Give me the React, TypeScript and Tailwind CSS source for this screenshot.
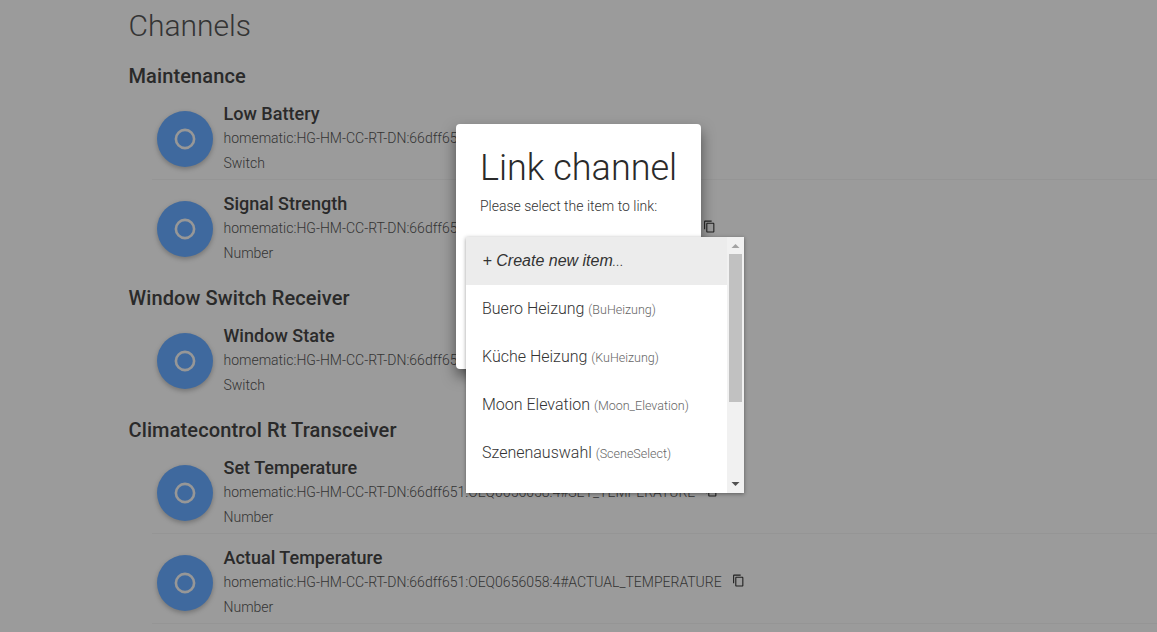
import clsx from "clsx";

interface Channel {
  name: string;
  uid: string;
  type: string;
}

interface ChannelGroup {
  title: string;
  channels: Channel[];
}

interface Item {
  label: string;
  name: string;
}

const THING_UID = "homematic:HG-HM-CC-RT-DN:66dff651:OEQ0656058";

const groups: ChannelGroup[] = [
  {
    title: "Maintenance",
    channels: [
      { name: "Low Battery", uid: `${THING_UID}:0#LOWBAT`, type: "Switch" },
      { name: "Signal Strength", uid: `${THING_UID}:0#SIGNAL_STRENGTH`, type: "Number" },
    ],
  },
  {
    title: "Window Switch Receiver",
    channels: [
      { name: "Window State", uid: `${THING_UID}:3#WINDOW_STATE`, type: "Switch" },
    ],
  },
  {
    title: "Climatecontrol Rt Transceiver",
    channels: [
      { name: "Set Temperature", uid: `${THING_UID}:4#SET_TEMPERATURE`, type: "Number" },
      { name: "Actual Temperature", uid: `${THING_UID}:4#ACTUAL_TEMPERATURE`, type: "Number" },
    ],
  },
];

const items: Item[] = [
  { label: "Buero Heizung", name: "BuHeizung" },
  { label: "Küche Heizung", name: "KuHeizung" },
  { label: "Moon Elevation", name: "Moon_Elevation" },
  { label: "Szenenauswahl", name: "SceneSelect" },
];

function CopyIcon() {
  return (
    <svg viewBox="0 0 24 24" className="h-[13px] w-[13px] fill-[#333]">
      <path d="M16 1H4c-1.100 0-2 .9-2 2v14h2V3h12V1zm3 4H8c-1.100 0-2 .9-2 2v14c0 1.100.9 2 2 2h11c1.100 0 2-.9 2-2V7c0-1.100-.9-2-2-2zm0 16H8V7h11v14z" />
    </svg>
  );
}

function ChannelRow({ channel, divider }: { channel: Channel; divider: boolean }) {
  return (
    <li className="flex h-[90px] pl-[157px]">
      <button className="mt-[21px] flex h-14 w-14 shrink-0 items-center justify-center rounded-full bg-[#66aaff] shadow-[0_2px_5px_rgba(0,0,0,0.26)]">
        <svg viewBox="0 0 22 22" className="mr-px h-[22px] w-[22px]">
          <circle cx="11" cy="11" r="9.100" fill="none" stroke="#f4f4f4" strokeWidth="2.600" />
        </svg>
      </button>
      <div
        className={clsx(
          "relative ml-[10.500px] flex-1 pt-3",
          divider && "before:absolute before:-left-[72px] before:right-0 before:bottom-0 before:h-px before:bg-[#f0f0f0]"
        )}
      >
        <h4 className="text-[18px] leading-6 font-medium tracking-[0.020px] text-[#444]">{channel.name}</h4>
        <div className="flex items-center whitespace-nowrap">
          <p className="text-[14px] leading-6 font-light text-[#555]">{channel.uid}</p>
          <button className="mt-[-4px] ml-[10px]">
            <CopyIcon />
          </button>
        </div>
        <p className="text-[14px] leading-[26px] font-light text-[#555]">{channel.type}</p>
      </div>
    </li>
  );
}

function Scrollbar() {
  return (
    <div className="flex w-[17px] flex-col items-center justify-between bg-[#f1f1f1]">
      <svg viewBox="0 0 17 17" className="h-[17px] w-[17px]">
        <path d="M4.500 11L8.500 7L12.500 11Z" fill="#a3a3a3" />
      </svg>
      <div className="mb-auto h-[148px] w-[13px] bg-[#c1c1c1]" />
      <svg viewBox="0 0 17 17" className="h-[17px] w-[17px]">
        <path d="M4.500 6L8.500 10L12.500 6Z" fill="#505050" />
      </svg>
    </div>
  );
}

function ItemMenu() {
  return (
    <div className="absolute top-[237px] left-[466px] flex h-64 w-[278px] overflow-hidden bg-white shadow-[0_1px_4px_rgba(0,0,0,0.4)]">
      <ul className="flex-1">
        <li className="flex h-12 items-center bg-[#ececec] pl-[16.500px] text-[16px] font-light text-[#333] italic">
          <span className="font-['Liberation_Sans',sans-serif] font-normal">+ Create new item</span>...
        </li>
        {items.map((item) => (
          <li key={item.name} className="flex h-12 items-center pl-4 text-[16px] font-light text-[#333]">
            <span>
              {item.label} <small className="text-[12.500px] text-[#666]">({item.name})</small>
            </span>
          </li>
        ))}
      </ul>
      <Scrollbar />
    </div>
  );
}

function LinkDialog() {
  return (
    <div className="absolute top-[124px] left-[456px] h-[245px] w-[245px] rounded-[4px] bg-white px-6 pt-6 shadow-[0_7px_14px_rgba(0,0,0,0.5)]">
      <h2 className="text-[36px] leading-[40px] font-light whitespace-nowrap text-[#2a2a2a]">Link channel</h2>
      <p className="mt-2 text-[14px] leading-5 font-light text-[#333]">Please select the item to link:</p>
    </div>
  );
}

export default function App() {
  return (
    <div className="relative h-[632px] w-full overflow-hidden bg-[#fafafa] font-[Roboto,sans-serif] antialiased">
      <main>
        <h1 className="h-12 pl-[128.500px] text-[30px] leading-[51px] font-light text-[#555]">Channels</h1>
        {groups.map((group) => (
          <section key={group.title}>
            <h3 className="h-[42px] pt-4 pl-[128.500px] text-[20px] leading-6 font-medium tracking-[0.120px] text-[#444]">
              {group.title}
            </h3>
            <ul>
              {group.channels.map((channel, i) => (
                <ChannelRow
                  key={channel.uid}
                  channel={channel}
                  divider={i < group.channels.length - 1 || channel.name === "Actual Temperature"}
                />
              ))}
            </ul>
          </section>
        ))}
      </main>
      <div className="absolute inset-0 bg-black/38" />
      <LinkDialog />
      <ItemMenu />
    </div>
  );
}
